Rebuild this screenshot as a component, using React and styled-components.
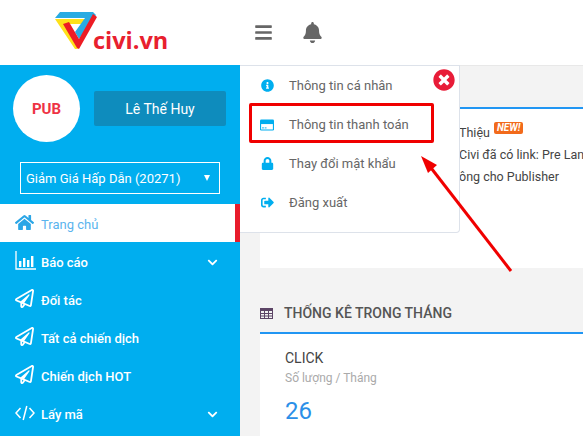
import React from 'react';
import styled, { createGlobalStyle } from 'styled-components';
import {
  FaBars,
  FaBell,
  FaChevronDown,
  FaHome,
  FaInfoCircle,
  FaLock,
  FaRegPaperPlane,
  FaSignOutAlt,
  FaTimesCircle,
} from 'react-icons/fa';

const GlobalStyle = createGlobalStyle`
  html, body {
    margin: 0;
    padding: 0;
    height: 100%;
    overflow: hidden;
    background: #f3f3f3;
    font-family: Roboto, "Liberation Sans", sans-serif;
  }
  * { box-sizing: border-box; }
`;

const ChartIcon = () => (
  <svg width="22" height="19" viewBox="0 0 22 19">
    <path d="M1 0v18h20" fill="none" stroke="#fff" strokeWidth="1.3" />
    <path d="M4 10h2.4v6H4zM8 7h2.4v9H8zM12 9h2.4v7H12zM16 5h2.4v11H16z" fill="#fff" />
  </svg>
);

const CodeIcon = () => (
  <svg width="20" height="16" viewBox="0 0 20 16">
    <path d="M5.5 3 L1 8 L5.5 13 M14.5 3 L19 8 L14.5 13 M11.8 1 L8.2 15" fill="none" stroke="#fff" strokeWidth="1.5" />
  </svg>
);

const TableIcon = () => (
  <svg width="13" height="11" viewBox="0 0 13 11">
    <rect x="0.5" y="0.5" width="12" height="10" fill="none" stroke="#5c4566" />
    <rect x="0.5" y="0.5" width="12" height="2.5" fill="#5c4566" />
    <path d="M0 5.5h13M0 8h13M4.5 0v11M8.5 0v11" stroke="#5c4566" />
  </svg>
);

const CardIcon = () => (
  <svg width="15" height="12" viewBox="0 0 15 12">
    <rect width="15" height="12" rx="1.4" fill="#00aeef" />
    <rect x="1.2" y="5" width="12.6" height="5.8" fill="#fff" />
    <rect x="2.2" y="8.6" width="2" height="1" fill="#00aeef" />
    <rect x="5" y="8.6" width="2" height="1" fill="#00aeef" />
  </svg>
);

const Logo = () => (
  <svg width="43" height="39" viewBox="0 0 43 39">
    <path d="M0 8 H31 L27 13 H9 L23 38 L20 38 Z" fill="#fee11a" />
    <path d="M0 7 L5 1 H38 L41 4 L24 28 L20 21 L30 7 Z" fill="#29abe2" />
    <path d="M8 13 L14 11 L24 28 L38 3 L42 6 L24 38 L22 37 Z" fill="#ed1c24" />
  </svg>
);

const menuItems = [
  { label: 'Báo cáo', icon: <ChartIcon />, more: true },
  { label: 'Đối tác', icon: <FaRegPaperPlane /> },
  { label: 'Tất cả chiến dịch', icon: <FaRegPaperPlane /> },
  { label: 'Chiến dịch HOT', icon: <FaRegPaperPlane /> },
  { label: 'Lấy mã', icon: <CodeIcon />, more: true },
];

const App = () => (
  <>
    <GlobalStyle />
    <Page>
      <Header>
        <Brand>
          <Logo />
          <BrandName>civi.vn</BrandName>
        </Brand>
        <HeaderTools>
          <FaBars />
          <FaBell />
        </HeaderTools>
      </Header>

      <Body>
        <Sidebar>
          <Profile>
            <Avatar>PUB</Avatar>
            <UserButton>Lê Thế Huy</UserButton>
          </Profile>
          <SiteSelect>
            <span>Giảm Giá Hấp Dẫn (20271)</span>
            <Caret />
          </SiteSelect>
          <Nav>
            <ActiveItem>
              <NavIcon><FaHome /></NavIcon>
              Trang chủ
            </ActiveItem>
            {menuItems.map((item) => (
              <NavItem key={item.label}>
                <NavIcon>{item.icon}</NavIcon>
                {item.label}
                {item.more && <More><FaChevronDown /></More>}
              </NavItem>
            ))}
          </Nav>
        </Sidebar>

        <Main>
          <TopRule />
          <NewsPanel>
            <NewsLine>
              Thiệu <NewBadge>NEW!</NewBadge>
            </NewsLine>
            <NewsLine>Civi đã có link: Pre Landing</NewsLine>
            <NewsLine>ông cho Publisher</NewsLine>
          </NewsPanel>
          <SectionHead>
            <TableIcon />
            <SectionTitle>THỐNG KÊ TRONG THÁNG</SectionTitle>
          </SectionHead>
          <StatPanel>
            <StatName>CLICK</StatName>
            <StatNote>Số lượng / Tháng</StatNote>
            <StatValue>26</StatValue>
          </StatPanel>
        </Main>
      </Body>

      <Dropdown>
        <CloseBadge><FaTimesCircle /></CloseBadge>
        <DropItem><DropIcon><FaInfoCircle /></DropIcon>Thông tin cá nhân</DropItem>
        <DropItem><DropIcon><CardIcon /></DropIcon>Thông tin thanh toán</DropItem>
        <DropItem><DropIcon><FaLock /></DropIcon>Thay đổi mật khẩu</DropItem>
        <DropItem><DropIcon><FaSignOutAlt /></DropIcon>Đăng xuất</DropItem>
      </Dropdown>

      <Highlight />
      <Arrow width="110" height="120" viewBox="0 0 110 120">
        <path d="M91 116 L8 9" stroke="#f00000" strokeWidth="3" fill="none" />
        <path d="M1 1 L17 10 L8 18 Z" fill="#f00000" />
      </Arrow>
    </Page>
  </>
);

const Page = styled.div`
  position: relative;
  width: 583px;
  height: 436px;
  overflow: hidden;
  background: #f3f3f3;
`;

const Header = styled.header`
  display: flex;
  align-items: center;
  height: 65px;
  background: #fff;
`;

const Brand = styled.div`
  display: flex;
  align-items: flex-start;
  width: 240px;
  height: 65px;
  padding: 11px 0 0 55px;
`;

const BrandName = styled.span`
  margin: 17px 0 0 -5px;
  color: #e8202e;
  font: 700 23.5px/24px "Open Sans", sans-serif;
`;

const HeaderTools = styled.div`
  display: flex;
  align-items: center;
  gap: 29px;
  padding-left: 14px;
  color: #666;
  font-size: 21px;

  svg:first-child { font-size: 19px; }
`;

const Body = styled.div`
  display: flex;
  height: 371px;
`;

const Sidebar = styled.aside`
  flex: none;
  width: 240px;
  height: 100%;
  background: #00aeef;
`;

const Profile = styled.div`
  display: flex;
  align-items: center;
  gap: 14px;
  height: 85px;
  padding: 10px 14px 8px 13px;
`;

const Avatar = styled.div`
  display: flex;
  align-items: center;
  justify-content: center;
  flex: none;
  width: 67px;
  height: 67px;
  border-radius: 50%;
  background: #fff;
  color: #ee3344;
  font-size: 15px;
  font-weight: 700;
`;

const UserButton = styled.div`
  display: flex;
  align-items: center;
  justify-content: center;
  width: 132px;
  height: 35px;
  border-radius: 2px;
  background: #0e8cbd;
  color: #fff;
  font-size: 14px;
`;

const SiteSelect = styled.div`
  display: flex;
  align-items: center;
  justify-content: space-between;
  width: 200px;
  height: 32px;
  margin: 12px 0 10px 20px;
  padding: 0 9px 0 5px;
  border: 1px solid #fff;
  color: #fff;
  font-size: 13px;
`;

const Caret = styled.i`
  width: 0;
  height: 0;
  border-left: 3.5px solid transparent;
  border-right: 3.5px solid transparent;
  border-top: 6px solid #fff;
`;

const Nav = styled.nav`
  display: flex;
  flex-direction: column;
`;

const NavItem = styled.div`
  display: flex;
  align-items: center;
  height: 38px;
  padding: 2px 22px 0 15px;
  color: #fff;
  font-size: 13px;
  font-weight: 500;
`;

const ActiveItem = styled(NavItem)`
  border-right: 5px solid #e81c2c;
  background: #fff;
  color: #5ab4ee;
  font-weight: 400;

  svg { color: #2ba6e6; }
`;

const NavIcon = styled.span`
  display: flex;
  align-items: center;
  width: 26px;
  margin-top: -3px;
  font-size: 19px;
`;

const More = styled.span`
  display: flex;
  margin-left: auto;
  font-size: 11px;
`;

const Main = styled.main`
  flex: 1;
  min-width: 0;
  padding-left: 20px;
`;

const TopRule = styled.div`
  height: 44px;
  border-top: 1px solid #e8e8e8;
  border-bottom: 2px solid #2196f3;
`;

const NewsPanel = styled.section`
  height: 159px;
  padding: 13px 0 0 199px;
  background: #fff;
  white-space: nowrap;
`;

const NewsLine = styled.div`
  height: 22px;
  color: #444;
  font-size: 12.5px;
  line-height: 22px;
`;

const NewBadge = styled.span`
  display: inline-block;
  margin-left: 1px;
  padding: 1px 3px;
  border-radius: 2px;
  background: #f26a1b;
  color: #fff;
  font-size: 10px;
  font-weight: 700;
  font-style: italic;
  line-height: 10px;
  vertical-align: 6px;
`;

const SectionHead = styled.div`
  display: flex;
  align-items: center;
  gap: 11px;
  height: 66px;
  padding-top: 26px;
  border-bottom: 2px solid #2196f3;
`;

const SectionTitle = styled.h2`
  margin: 0;
  color: #555;
  font-size: 14px;
  font-weight: 500;
`;

const StatPanel = styled.section`
  height: 102px;
  padding: 15px 25px;
  background: #fff;
`;

const StatName = styled.div`
  color: #444;
  font-size: 14px;
  line-height: 18px;
`;

const StatNote = styled.div`
  margin-top: 3px;
  color: #aaa;
  font-size: 12px;
  line-height: 16px;
`;

const StatValue = styled.div`
  margin-top: 11px;
  color: #2b8fe8;
  font-size: 24px;
  line-height: 28px;
`;

const Dropdown = styled.div`
  position: absolute;
  left: 240px;
  top: 65px;
  width: 220px;
  height: 168px;
  border: 1px solid #dde2ea;
  border-left: 0;
  border-radius: 0 0 4px 0;
  background: #fff;
`;

const DropItem = styled.div`
  display: flex;
  align-items: center;
  height: 39px;
  padding-left: 20px;
  color: #666;
  font-size: 13px;
`;

const DropIcon = styled.span`
  display: flex;
  justify-content: center;
  align-items: center;
  width: 14px;
  margin-right: 15px;
  color: #00aeef;
  font-size: 13px;
`;

const CloseBadge = styled.span`
  position: absolute;
  right: 4px;
  top: 3px;
  width: 22px;
  height: 22px;
  color: #e81c38;
  font-size: 22px;
  line-height: 22px;
`;

const Highlight = styled.div`
  position: absolute;
  left: 249px;
  top: 103px;
  width: 185px;
  height: 40px;
  border: 3px solid #f00000;
  border-radius: 2px;
`;

const Arrow = styled.svg`
  position: absolute;
  left: 420px;
  top: 155px;
`;

export default App;
